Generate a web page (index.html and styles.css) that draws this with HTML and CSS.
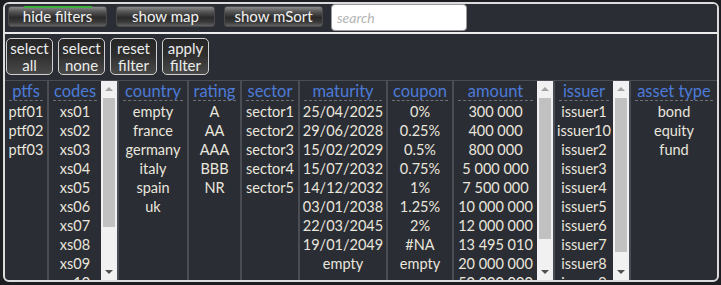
FILE: index.html
```html
<!DOCTYPE html>
<html>
<head>
<meta charset="utf-8">
<link rel="stylesheet" href="styles.css">
</head>
<body>
<div class="frame">
  <div class="toolbar">
    <button class="tbtn tbtn-active">hide filters</button>
    <button class="tbtn">show map</button>
    <button class="tbtn">show mSort</button>
    <input class="search" type="text" placeholder="search">
  </div>
  <div class="actions">
    <button class="abtn">select<br>all</button>
    <button class="abtn">select<br>none</button>
    <button class="abtn">reset<br>filter</button>
    <button class="abtn">apply<br>filter</button>
  </div>
  <div class="columns">
    <div class="col w-ptfs">
      <div class="head">ptfs</div>
      <div class="items"><div>ptf01</div><div>ptf02</div><div>ptf03</div></div>
    </div>
    <div class="col col-sb">
      <div class="list w-codes">
        <div class="head">codes</div>
        <div class="items"><div>xs01</div><div>xs02</div><div>xs03</div><div>xs04</div><div>xs05</div><div>xs06</div><div>xs07</div><div>xs08</div><div>xs09</div><div>xs10</div></div>
      </div>
      <div class="sb"><div class="sb-up"></div><div class="sb-thumb th-codes"></div><div class="sb-fill"></div><div class="sb-down"></div></div>
    </div>
    <div class="col w-country">
      <div class="head">country</div>
      <div class="items"><div>empty</div><div>france</div><div>germany</div><div>italy</div><div>spain</div><div>uk</div></div>
    </div>
    <div class="col w-rating">
      <div class="head">rating</div>
      <div class="items"><div>A</div><div>AA</div><div>AAA</div><div>BBB</div><div>NR</div></div>
    </div>
    <div class="col w-sector">
      <div class="head">sector</div>
      <div class="items"><div>sector1</div><div>sector2</div><div>sector3</div><div>sector4</div><div>sector5</div></div>
    </div>
    <div class="col w-maturity">
      <div class="head">maturity</div>
      <div class="items"><div>25/04/2025</div><div>29/06/2028</div><div>15/02/2029</div><div>15/07/2032</div><div>14/12/2032</div><div>03/01/2038</div><div>22/03/2045</div><div>19/01/2049</div><div>empty</div></div>
    </div>
    <div class="col w-coupon">
      <div class="head">coupon</div>
      <div class="items"><div>0%</div><div>0.25%</div><div>0.5%</div><div>0.75%</div><div>1%</div><div>1.25%</div><div>2%</div><div>#NA</div><div>empty</div></div>
    </div>
    <div class="col col-sb">
      <div class="list w-amount">
        <div class="head">amount</div>
        <div class="items"><div>300 000</div><div>400 000</div><div>800 000</div><div>5 000 000</div><div>7 500 000</div><div>10 000 000</div><div>12 000 000</div><div>13 495 010</div><div>20 000 000</div><div>50 000 000</div></div>
      </div>
      <div class="sb"><div class="sb-up"></div><div class="sb-thumb th-amount"></div><div class="sb-fill"></div><div class="sb-down"></div></div>
    </div>
    <div class="col col-sb">
      <div class="list w-issuer">
        <div class="head">issuer</div>
        <div class="items"><div>issuer1</div><div>issuer10</div><div>issuer2</div><div>issuer3</div><div>issuer4</div><div>issuer5</div><div>issuer6</div><div>issuer7</div><div>issuer8</div><div>issuer9</div></div>
      </div>
      <div class="sb"><div class="sb-up"></div><div class="sb-thumb th-issuer"></div><div class="sb-fill"></div><div class="sb-down"></div></div>
    </div>
    <div class="col col-last">
      <div class="head">asset type</div>
      <div class="items"><div>bond</div><div>equity</div><div>fund</div></div>
    </div>
  </div>
</div>
</body>
</html>
```

FILE: styles.css
```css
html, body {
  margin: 0;
  padding: 0;
}
body {
  background: #1d1e21;
  font-family: "Lato", "Noto Sans", sans-serif;
  width: 721px;
  height: 285px;
  overflow: hidden;
}
.frame {
  margin: 2px 2px 0 3px;
  height: 276px;
  border: 2px solid #dcdcdc;
  border-radius: 6px;
  background: #2b2d35;
  display: flex;
  flex-direction: column;
  overflow: hidden;
}
.toolbar {
  height: 28px;
  flex: none;
  display: flex;
  align-items: flex-start;
  padding-left: 3px;
  border-bottom: 2px solid #ececec;
  background: #2b2d35;
}
.tbtn {
  position: relative;
  margin-top: 2px;
  height: 21px;
  width: 99px;
  margin-right: 9px;
  padding: 0;
  border: 1px solid #4a4a4a;
  border-radius: 3px;
  background: linear-gradient(#8a8a8a 0%, #555 25%, #2a2a2a 55%, #3a3a3a 80%, #626262 100%);
  color: #f2f2f2;
  font-family: inherit;
  font-size: 15px;
  line-height: 19px;
}
.tbtn-active::before {
  content: "";
  position: absolute;
  left: 15px;
  right: 14px;
  top: -1px;
  height: 2px;
  background: #3fae3f;
}
.search {
  margin: 0 0 0 -1px;
  width: 136px;
  height: 27px;
  box-sizing: border-box;
  border: 1px solid #9a9a9a;
  border-radius: 4px;
  background: #fff;
  padding: 0 5px;
  font-family: inherit;
  font-size: 14px;
}
.search::placeholder {
  color: #b4b4b4;
  font-style: italic;
}
.actions {
  flex: none;
  height: 47px;
  display: flex;
  align-items: flex-start;
  gap: 5px;
  padding: 4px 0 0 1px;
  box-sizing: border-box;
  border-bottom: 1px solid #4b4d55;
}
.abtn {
  width: 47px;
  height: 37px;
  padding: 0;
  border: 1px solid #d0d0d0;
  border-radius: 5px;
  background: linear-gradient(#262626 0%, #2e2e2e 45%, #4a4a4a 100%);
  color: #ececec;
  font-family: inherit;
  font-size: 15px;
  line-height: 17px;
}
.columns {
  flex: 1;
  display: flex;
  min-height: 0;
  overflow: hidden;
}
.col {
  display: flex;
  flex-direction: column;
  border-right: 2px solid #4b4d55;
  flex: none;
  text-align: center;
  overflow: hidden;
}
.col-sb {
  flex-direction: row;
}
.list {
  display: flex;
  flex-direction: column;
  overflow: hidden;
}
.head {
  height: 19px;
  line-height: 20px;
  margin: 0 4px;
  border-bottom: 1px dashed #6e7078;
  color: #4c7bd8;
  font-size: 16.5px;
  white-space: nowrap;
  flex: none;
}
.items {
  padding-top: 1px;
  color: #e9e6dc;
  font-size: 14.5px;
  line-height: 19px;
  white-space: nowrap;
}
.w-ptfs { width: 42px; }
.w-codes { width: 52px; }
.w-country { width: 68px; }
.w-rating { width: 51px; }
.w-sector { width: 56px; }
.w-maturity { width: 86px; }
.w-coupon { width: 64px; }
.w-amount { width: 83px; }
.w-issuer { width: 58px; }
.col-last {
  flex: 1;
  border-right: none;
}
.sb {
  width: 16px;
  flex: none;
  background: #f1f1f1;
  display: flex;
  flex-direction: column;
  align-items: center;
}
.sb-up, .sb-down {
  height: 16px;
  width: 16px;
  flex: none;
  position: relative;
}
.sb-up::after {
  content: "";
  position: absolute;
  left: 4px;
  top: 6px;
  border-left: 4px solid transparent;
  border-right: 4px solid transparent;
  border-bottom: 4px solid #a3a3a3;
}
.sb-down::after {
  content: "";
  position: absolute;
  left: 4px;
  top: 6px;
  border-left: 4px solid transparent;
  border-right: 4px solid transparent;
  border-top: 4px solid #505050;
}
.sb-thumb {
  width: 12px;
  margin-top: 1px;
  background: #c1c1c1;
  flex: none;
}
.th-codes { height: 129px; }
.th-amount { height: 141px; }
.th-issuer { height: 154px; }
.sb-fill {
  flex: 1;
}
```
